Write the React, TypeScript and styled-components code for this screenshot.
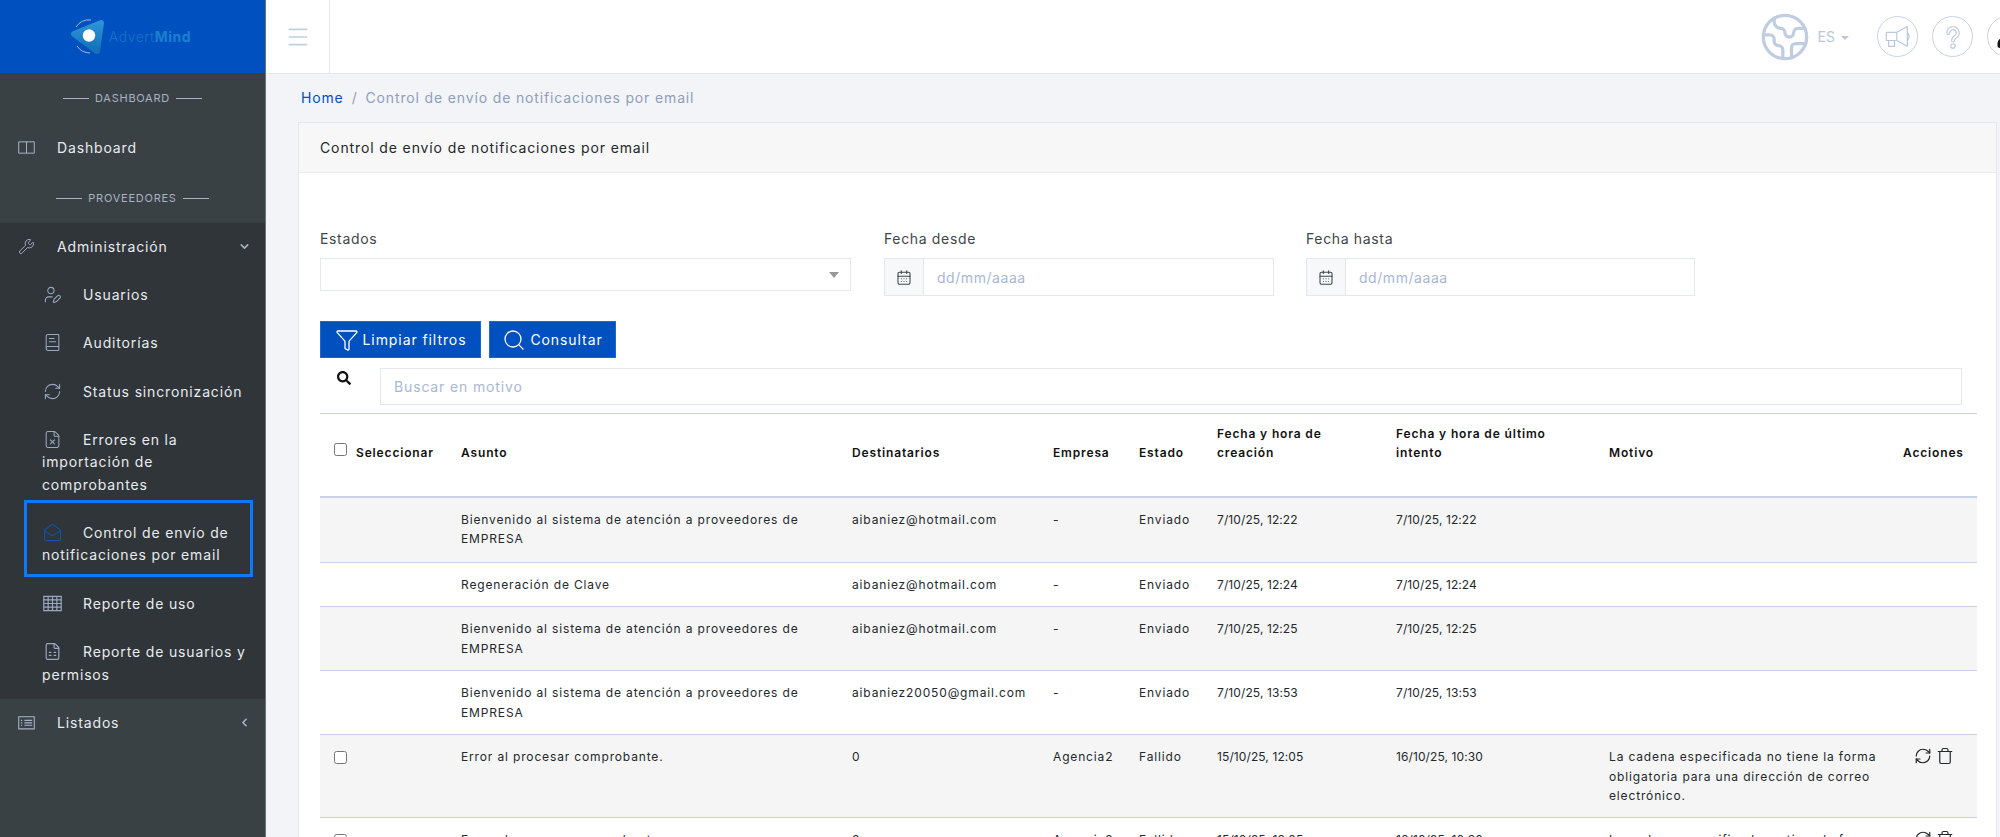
import React from "react";
import styled, { createGlobalStyle } from "styled-components";
import {
  Wrench, UserPen, BookText, RefreshCw, FileX, MailOpen, FileSpreadsheet,
  ChevronDown, ChevronLeft, Menu, Earth, Funnel, Search, CalendarDays, Trash,
} from "lucide-react";
import { FaSearch, FaUser } from "react-icons/fa";

const Global = createGlobalStyle`
  html, body { margin: 0; height: 100%; overflow: hidden; background: #f2f4f8; }
  body { font-family: Inter, "Liberation Sans", sans-serif; }
  * { box-sizing: border-box; }
  #root { height: 100%; }
`;

const Shell = styled.div`display: flex; width: 2000px; height: 837px; overflow: hidden;`;
const Sidebar = styled.aside`width: 266px; flex: none; background: #3a4144; color: #e8ebf0; border-right: 1px solid #6d7477; display: flex; flex-direction: column;`;
const Brand = styled.div`height: 73px; flex: none; background: #0050bf; display: flex; align-items: center; justify-content: center; gap: 3px; padding-right: 4px;`;
const BrandText = styled.span`font-size: 14px; color: #1375c6; font-weight: 300; letter-spacing: .5px; b { font-weight: 700; color: #1a80d0; }`;
const SectionTitle = styled.div<{ $shift?: boolean }>`height: ${(p) => (p.$shift ? "52px" : "50px")}; padding-top: ${(p) => (p.$shift ? "2px" : "0")}; display: flex; align-items: center; justify-content: center; gap: 6px; font-size: 11px; letter-spacing: .75px; color: #a7b2c8;
  &::before, &::after { content: ""; width: 26px; height: 1px; background: #a7b2c8; }`;
const NavItem = styled.div<{ $raised?: boolean }>`height: 48px; padding: 0 0 ${(p) => (p.$raised ? "2px" : "0")} 18px; display: flex; align-items: center; font-size: 14px; letter-spacing: .85px; color: #e8ebf0; position: relative;
  > svg:first-child { width: 17px; height: 17px; color: #a7b2c8; margin-right: 22px; }`;
const Chevron = styled.span`position: absolute; right: 14px; top: 17px; color: #a7b2c8; display: flex;
  svg { width: 13px; height: 13px; }`;
const Group = styled.div`background: #2f3538;`;
const SubItem = styled.div<{ $active?: boolean }>`
  margin: ${(p) => (p.$active ? "-9.3px 12px 3px 24px" : "0 12px 0 24px")};
  padding: ${(p) => (p.$active ? "19px 0 7px 15px" : "13px 0 12.8px 18px")};
  border: ${(p) => (p.$active ? "3px solid #0a7bff" : "0")};
  position: relative;
  font-size: 14px; line-height: 22.5px; letter-spacing: .85px; color: #e8ebf0;
  svg { width: 19px; height: 19px; color: ${(p) => (p.$active ? "#0f55b8" : "#9aa8c4")}; vertical-align: -4px; margin: 0 21px 0 1px; }
`;

const Main = styled.div`flex: 1; min-width: 0; display: flex; flex-direction: column;`;
const Topbar = styled.header`height: 74px; flex: none; background: #fff; border-bottom: 1px solid #e2e6ee; display: flex; align-items: center;`;
const Burger = styled.div`width: 64px; height: 73px; border-right: 1px solid #e2e6ee; display: flex; align-items: center; justify-content: center; color: #c3cedf;
  svg { width: 26px; height: 26px; }`;
const TopRight = styled.div`margin-left: auto; display: flex; align-items: center; gap: 14px; margin-right: -28px; color: #c3cedf;`;
const Globe = styled.div`display: flex; align-items: center; font-size: 14px; color: #b9c6db; margin-right: 14px; gap: 7px;
  svg { width: 52px; height: 52px; color: #c0cde0; }`;
const Caret = styled.i`display: inline-block; margin-left: 6px; border: 4px solid transparent; border-top-color: #b9c6db; border-bottom: 0; vertical-align: 2px;`;
const RoundBtn = styled.div`width: 41px; height: 41px; border: 1px solid #c8d2e4; border-radius: 50%; display: flex; align-items: center; justify-content: center; color: #b9c6db; overflow: hidden;
  svg { width: 28px; height: 28px; }`;
const AvatarIcon = styled(RoundBtn)`align-items: flex-end; svg { color: #111; margin-bottom: 8px; width: 24px; height: 24px; flex: none; }`;

const Crumbs = styled.div`height: 48px; flex: none; display: flex; align-items: center; padding: 0 0 2px 35px; font-size: 14px; letter-spacing: .85px; color: #8f9fbb; gap: 8px;`;
const Home = styled.span`color: #0050bf;`;
const Card = styled.section`margin: 0 3px 0 32px; width: 1699px; flex: 1; background: #fff; border: 1px solid #e3e7f0; border-bottom: 0; min-height: 0; overflow: hidden;`;
const CardHead = styled.div`height: 50px; padding: 0 21px; display: flex; align-items: center; background: #f7f7f7; border-bottom: 1px solid #e9ecf2; font-size: 14px; letter-spacing: .88px; color: #23282c;`;
const CardBody = styled.div`padding: 0 19px 0 21px;`;
const Filters = styled.div`display: flex; padding-top: 56px; height: 148px;`;
const Field = styled.div<{ $w: number; $ml: number }>`width: ${(p) => p.$w}px; margin-left: ${(p) => p.$ml}px;`;
const Label = styled.div`font-size: 14px; letter-spacing: .65px; color: #3f4549; line-height: 20px; margin-bottom: 10px;`;
const SelectBox = styled.div`height: 33px; border: 1px solid #e4e7ee; position: relative; background: #fff; margin-top: -1px;
  &::after { content: ""; position: absolute; right: 11px; top: 13px; border: 5px solid transparent; border-top: 6px solid #999; border-bottom: 0; }`;
const DateBox = styled.div`height: 38px; margin-top: -1px; border: 1px solid #e4e7ee; display: flex; align-items: stretch; font-size: 14px; color: #a9b7d2;`;
const Addon = styled.div`width: 39px; flex: none; background: #f7f8fa; border-right: 1px solid #e4e7ee; display: flex; align-items: center; justify-content: center; color: #3c444d;
  svg { width: 16px; height: 17px; }`;
const Placeholder = styled.div`display: flex; align-items: center; padding-left: 13px; letter-spacing: .55px;`;
const Buttons = styled.div`display: flex; gap: 8px; height: 37px;`;
const Btn = styled.div<{ $w: number }>`width: ${(p) => p.$w}px; background: #0050bf; border: 1px solid #1c68d0; color: #fff; font-size: 14px; letter-spacing: .92px; display: flex; align-items: center; justify-content: center; gap: 4px;
  svg { width: 24px; height: 24px; stroke-width: 1.3; }`;
const SearchRow = styled.div`display: flex; height: 37px; margin-top: 9.5px;`;
const SearchIcon = styled.div`width: 60px; padding: 3px 0 0 17px; color: #111; font-size: 14px; flex: none;`;
const SearchInput = styled.div`flex: 1; margin-right: 15px; border: 1px solid #e4e7ee; padding-left: 13px; display: flex; align-items: center; font-size: 14px; letter-spacing: .85px; color: #a9b7d2;`;

const DataTable = styled.table`width: 1657px; table-layout: fixed; border-collapse: collapse; margin-top: 8.5px; font-size: 12px; line-height: 19.5px; letter-spacing: .85px; color: #23282c;
  th { font-weight: 600; color: #111; text-align: left; padding: 0 12px 33px; height: 83px; vertical-align: bottom; border-top: 1px solid #c8d2e4; border-bottom: 2px solid #c8d2e4; }
  td { padding: 12px; vertical-align: top; border-top: 1px solid #c8d2e4; }
  tbody tr:nth-child(odd) { background: #f5f5f5; }
  tbody tr:nth-child(1) td { padding-bottom: 13px; }
  tbody tr:nth-child(5) td { padding-bottom: 11px; }
`;
const DateCell = styled.td`letter-spacing: .1px;`;
const Check = styled.input.attrs({ type: "checkbox" })`width: 13px; height: 13px; margin: 4px 0 0 2px; display: block;`;
const SelectHead = styled.div`display: flex; align-items: flex-start; gap: 9px; white-space: nowrap; letter-spacing: .85px;
  input { margin-top: 0; }`;
const ActionIcons = styled.div`display: flex; gap: 4px; padding-left: 11px; color: #23282c; svg { width: 18px; height: 18px; stroke-width: 1.6; }`;

const Logo = () => (
  <svg width="36" height="36" viewBox="0 0 36 36">
    <defs>
      <linearGradient id="lg" x1="0" y1="0" x2="0" y2="1">
        <stop offset="0" stopColor="#2b93d6" />
        <stop offset="1" stopColor="#1470b8" />
      </linearGradient>
    </defs>
    <path d="M31 4 L27 32 L4 15 Z" fill="url(#lg)" stroke="url(#lg)" strokeWidth="6" strokeLinejoin="round" />
    <path d="M6 8 A16 16 0 0 1 21 1 M7 27 A16 16 0 0 0 20 34" fill="none" stroke="#a9b7cf" strokeWidth="1" />
    <circle cx="19" cy="16.5" r="6.2" fill="#fff" />
  </svg>
);
const BoxColumns = () => (
  <svg viewBox="0 0 24 24" fill="none" stroke="currentColor" strokeWidth="1.4"><path d="M1 4h22v16H1zM12 4v16" /></svg>
);
const ListBox = () => (
  <svg viewBox="0 0 24 24" fill="none" stroke="currentColor" strokeWidth="1.5"><path d="M1 4h22v17H1zM9 9h11M9 12.5h11M9 16h11M4 9h2M4 12.5h2M4 16h2" /></svg>
);
const GridTable = () => (
  <svg viewBox="0 0 24 24" fill="none" stroke="currentColor" strokeWidth="1.5"><path d="M1 3h22v18H1zM1 7.5h22M1 12h22M1 16.5h22M6.5 3v18M12 3v18M17.5 3v18" /></svg>
);
const Horn = () => (
  <svg viewBox="0 0 24 24" fill="none" stroke="currentColor" strokeWidth="1" strokeLinejoin="round"><path d="M2 8h9v7H2zM11 8l9-5v17l-9-5M4 15v5h5v-5M20 8c2 2 2 5 0 7" /></svg>
);
const Question = () => (
  <svg viewBox="0 0 24 24" fill="none" strokeLinecap="round">
    <path d="M8 8.5a4 4 0 1 1 6 3.4c-1.5.9-2 1.8-2 3.1" stroke="#b9c6db" strokeWidth="3.4" />
    <path d="M8 8.5a4 4 0 1 1 6 3.4c-1.5.9-2 1.8-2 3.1" stroke="#fff" strokeWidth="1.6" />
    <rect x="10.2" y="18" width="3.6" height="3.6" rx="1.2" stroke="#b9c6db" strokeWidth="1" />
  </svg>
);

const rows = [
  ["", "Bienvenido al sistema de atención a proveedores de EMPRESA", "aibaniez@hotmail.com", "-", "Enviado", "7/10/25, 12:22", "7/10/25, 12:22", ""],
  ["", "Regeneración de Clave", "aibaniez@hotmail.com", "-", "Enviado", "7/10/25, 12:24", "7/10/25, 12:24", ""],
  ["", "Bienvenido al sistema de atención a proveedores de EMPRESA", "aibaniez@hotmail.com", "-", "Enviado", "7/10/25, 12:25", "7/10/25, 12:25", ""],
  ["", "Bienvenido al sistema de atención a proveedores de EMPRESA", "aibaniez20050@gmail.com", "-", "Enviado", "7/10/25, 13:53", "7/10/25, 13:53", ""],
  ["x", "Error al procesar comprobante.", "0", "Agencia2", "Fallido", "15/10/25, 12:05", "16/10/25, 10:30", "La cadena especificada no tiene la forma obligatoria para una dirección de correo electrónico."],
  ["x", "Error al procesar comprobante.", "0", "Agencia2", "Fallido", "15/10/25, 12:05", "16/10/25, 10:30", "La cadena especificada no tiene la forma obligatoria para una dirección de correo electrónico."],
];
const widths = [129, 391, 201, 86, 78, 179, 213, 294, 86];

export default function App() {
  return (
    <Shell>
      <Global />
      <Sidebar>
        <Brand><Logo /><BrandText>Advert<b>Mind</b></BrandText></Brand>
        <SectionTitle>DASHBOARD</SectionTitle>
        <NavItem><BoxColumns />Dashboard</NavItem>
        <SectionTitle $shift>PROVEEDORES</SectionTitle>
        <Group>
          <NavItem $raised><Wrench strokeWidth={1.3} />Administración<Chevron><ChevronDown strokeWidth={3} /></Chevron></NavItem>
          <SubItem><UserPen strokeWidth={1.3} />Usuarios</SubItem>
          <SubItem><BookText strokeWidth={1.3} />Auditorías</SubItem>
          <SubItem><RefreshCw strokeWidth={1.3} />Status sincronización</SubItem>
          <SubItem><FileX strokeWidth={1.3} />Errores en la importación de comprobantes</SubItem>
          <SubItem $active><MailOpen strokeWidth={1.3} />Control de envío de notificaciones por email</SubItem>
          <SubItem><GridTable />Reporte de uso</SubItem>
          <SubItem><FileSpreadsheet strokeWidth={1.5} />Reporte de usuarios y permisos</SubItem>
        </Group>
        <NavItem><ListBox />Listados<Chevron><ChevronLeft strokeWidth={3} /></Chevron></NavItem>
      </Sidebar>
      <Main>
        <Topbar>
          <Burger><Menu strokeWidth={1.5} /></Burger>
          <TopRight>
            <Globe><Earth strokeWidth={1.5} /><span>ES<Caret /></span></Globe>
            <RoundBtn><Horn /></RoundBtn>
            <RoundBtn><Question /></RoundBtn>
            <AvatarIcon><FaUser /></AvatarIcon>
          </TopRight>
        </Topbar>
        <Crumbs><Home>Home</Home><span>/</span><span>Control de envío de notificaciones por email</span></Crumbs>
        <Card>
          <CardHead>Control de envío de notificaciones por email</CardHead>
          <CardBody>
            <Filters>
              <Field $w={531} $ml={0}><Label>Estados</Label><SelectBox /></Field>
              <Field $w={390} $ml={33}><Label>Fecha desde</Label><DateBox><Addon><CalendarDays strokeWidth={1.6} /></Addon><Placeholder>dd/mm/aaaa</Placeholder></DateBox></Field>
              <Field $w={389} $ml={32}><Label>Fecha hasta</Label><DateBox><Addon><CalendarDays strokeWidth={1.6} /></Addon><Placeholder>dd/mm/aaaa</Placeholder></DateBox></Field>
            </Filters>
            <Buttons>
              <Btn $w={161}><Funnel />Limpiar filtros</Btn>
              <Btn $w={127}><Search />Consultar</Btn>
            </Buttons>
            <SearchRow>
              <SearchIcon><FaSearch /></SearchIcon>
              <SearchInput>Buscar en motivo</SearchInput>
            </SearchRow>
            <DataTable>
              <colgroup>{widths.map((w, i) => <col key={i} width={w} />)}</colgroup>
              <thead>
                <tr>
                  <th><SelectHead><Check />Seleccionar</SelectHead></th>
                  <th>Asunto</th>
                  <th>Destinatarios</th>
                  <th>Empresa</th>
                  <th>Estado</th>
                  <th>Fecha y hora de creación</th>
                  <th>Fecha y hora de último intento</th>
                  <th>Motivo</th>
                  <th>Acciones</th>
                </tr>
              </thead>
              <tbody>
                {rows.map((r, i) => (
                  <tr key={i}>
                    <td>{r[0] && <Check />}</td>
                    <td>{r[1]}</td>
                    <td>{r[2]}</td>
                    <td>{r[3]}</td>
                    <td>{r[4]}</td>
                    <DateCell>{r[5]}</DateCell>
                    <DateCell>{r[6]}</DateCell>
                    <td>{r[7]}</td>
                    <td>{r[0] && <ActionIcons><RefreshCw /><Trash /></ActionIcons>}</td>
                  </tr>
                ))}
              </tbody>
            </DataTable>
          </CardBody>
        </Card>
      </Main>
    </Shell>
  );
}
